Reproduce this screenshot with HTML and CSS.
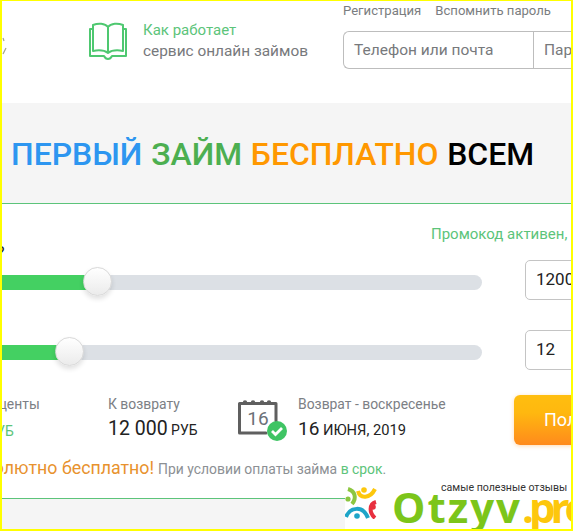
FILE: index.html
```html
<!DOCTYPE html>
<html lang="ru">
<head>
  <meta charset="UTF-8" />
  <title>Первый займ бесплатно</title>
  <link rel="stylesheet" href="styles.css">
</head>
<body>
  <div class="frame">

    <header class="top">
      <svg class="logo-scrap" width="5" height="20" viewBox="0 0 5 20" fill="none" stroke="#a3a58c" stroke-width="1.2">
        <path d="M1 1 L2 4" />
        <path d="M4 11 L1 17" />
      </svg>
      <div class="how">
        <svg class="book-icon" width="40" height="38" viewBox="0 0 40 38" fill="none" stroke="#4ec870" stroke-width="2" stroke-linejoin="round">
          <path d="M5 3 C10 1 17 1 20 5 C23 1 30 1 35 3 V29 C30 28 24 28 20 31 C16 28 10 28 5 29 Z" />
          <path d="M20 5 V31" />
          <path d="M5 7 H2 V34 H16 C17 36 18 37 20 37 C22 37 23 36 24 34 H38 V7 H35" />
        </svg>
        <div class="how-text">
          <div class="how-title">Как работает</div>
          <div class="how-sub">сервис онлайн займов</div>
        </div>
      </div>
      <div class="login">
        <div class="login-links">
          <span>Регистрация</span>
          <span>Вспомнить пароль</span>
        </div>
        <div class="login-inputs">
          <div class="login-field login-phone">Телефон или почта</div>
          <div class="login-field login-pass">Пароль</div>
        </div>
      </div>
    </header>

    <div class="banner">
      <span class="blue">ПЕРВЫЙ</span>
      <span class="green">ЗАЙМ</span>
      <span class="orange">БЕСПЛАТНО</span>
      <span>ВСЕМ</span>
    </div>

    <section class="calc">
      <div class="promo">Промокод активен, скидка</div>
      <div class="question">?</div>

      <div class="slider-row slider-amount">
        <div class="track">
          <div class="track-fill fill-amount"></div>
          <div class="thumb"></div>
        </div>
        <div class="value-box">12000</div>
      </div>

      <div class="slider-row slider-days">
        <div class="track">
          <div class="track-fill fill-days"></div>
          <div class="thumb"></div>
        </div>
        <div class="value-box">12</div>
      </div>

      <div class="summary">
        <div class="sum-col col-percent">
          <div class="sum-label">Проценты</div>
          <div class="sum-free">0 РУБ</div>
        </div>
        <div class="sum-col col-return">
          <div class="sum-label">К возврату</div>
          <div class="sum-value"><b>12 000</b> РУБ</div>
        </div>
        <svg class="cal-icon" width="50" height="44" viewBox="0 0 50 44">
          <path d="M1.5 4.5 H38 V22 M28 34 H1.5 V4.5" fill="none" stroke="#5f5f5f" stroke-width="3" stroke-linejoin="round" stroke-linecap="round" />
          <g fill="#5f5f5f">
            <circle cx="7" cy="3.5" r="2.2" />
            <circle cx="15" cy="3.5" r="2.2" />
            <circle cx="24" cy="3.5" r="2.2" />
            <circle cx="31" cy="3.5" r="2.2" />
          </g>
          <text class="cal-day" x="20" y="26" text-anchor="middle">16</text>
          <circle cx="39" cy="32" r="10" fill="#3fc464" />
          <path d="M34 32 L37.5 35.5 L44 29" fill="none" stroke="#fff" stroke-width="2.8" />
        </svg>
        <div class="sum-col col-date">
          <div class="sum-label">Возврат - воскресенье</div>
          <div class="sum-value date-value"><b>16</b> ИЮНЯ, 2019</div>
        </div>
        <div class="get-btn">Получить деньги</div>
      </div>

      <div class="note">
        <span class="note-free">Абсолютно бесплатно!</span>
        <span class="note-small">При условии оплаты займа <span class="note-green">в срок</span>.</span>
      </div>
    </section>

    <div class="bottom"></div>

    <div class="watermark">
      <svg class="mark-logo" width="32" height="32" viewBox="0 0 32 32" fill="none" stroke-width="4">
        <path d="M3 2 C10 4 12 11 7 17" stroke="#8cc63f" />
        <circle cx="3" cy="12" r="2.6" fill="#8cc63f" stroke="none" />
        <path d="M13 4 C15 12 25 12 30 2" stroke="#fdc70c" />
        <circle cx="19" cy="3" r="2.8" fill="#fdc70c" stroke="none" />
        <path d="M31 15 C24 17 24 26 30 31" stroke="#e8303f" />
        <circle cx="28" cy="20" r="2.8" fill="#e8303f" stroke="none" />
        <path d="M1 30 C5 20 18 18 23 31" stroke="#1ea5c8" />
        <circle cx="12" cy="29" r="2.8" fill="#1ea5c8" stroke="none" />
      </svg>
      <div class="mark-text">
        <div class="mark-tag">самые полезные отзывы</div>
        <div class="mark-name">Otzyv<span class="mark-pro">.pro</span></div>
      </div>
    </div>

  </div>
</body>
</html>
```

FILE: styles.css
```css
html, body {
  margin: 0;
  padding: 0;
  height: 100%;
  overflow: hidden;
  font-family: Roboto, sans-serif;
  background: #fff;
}

.frame {
  position: relative;
  box-sizing: border-box;
  width: 573px;
  height: 531px;
  border-style: solid;
  border-color: #ffff00;
  border-width: 1px 2px 2px 2px;
  overflow: hidden;
}

/* header */
.top {
  display: flex;
  height: 102px;
}

.logo-scrap {
  flex-shrink: 0;
  margin-top: 36px;
}

.how {
  display: flex;
  flex-shrink: 0;
  gap: 15px;
  width: 220px;
  margin-left: 81px;
  padding-top: 21px;
}

.book-icon {
  flex-shrink: 0;
}

.how-text {
  margin-top: -2px;
  white-space: nowrap;
}

.how-title {
  color: #5cc47a;
  font-size: 15px;
  line-height: 21px;
}

.how-sub {
  color: #77797c;
  font-size: 15.4px;
  line-height: 21px;
}

.login {
  flex-shrink: 0;
  margin-left: 35px;
  padding-top: 2px;
}

.login-links {
  display: flex;
  gap: 14px;
  color: #7a7d80;
  font-size: 13.1px;
  line-height: 16px;
}

.login-inputs {
  display: flex;
  box-sizing: border-box;
  margin-top: 12px;
  width: 400px;
  height: 38px;
  border: 1px solid #bdbdbd;
  border-right: 0;
  border-radius: 6px 0 0 6px;
}

.login-field {
  box-sizing: border-box;
  color: #77797c;
  font-size: 15.5px;
  line-height: 36px;
  padding-left: 10px;
}

.login-phone {
  width: 190px;
  border-right: 1px solid #bdbdbd;
}

/* banner */
.banner {
  display: flex;
  gap: 8.8px;
  height: 100px;
  padding-left: 9px;
  background: #f5f5f5;
  border-bottom: 1px solid #5cc47a;
  color: #000;
  font-size: 31.9px;
  font-weight: 500;
  line-height: 102px;
  white-space: nowrap;
}

.blue { color: #2d96f0; }
.green { color: #4caf50; }
.orange { color: #ff9800; }

/* calculator */
.calc {
  height: 294px;
  border-bottom: 1px solid #5cc47a;
}

.promo {
  padding-top: 21px;
  margin-left: 429px;
  white-space: nowrap;
  color: #5cc47a;
  font-size: 15px;
  line-height: 18px;
}

.question {
  height: 16px;
  margin-left: -5px;
  color: #222;
  font-size: 16px;
  line-height: 20px;
}

.slider-row {
  display: flex;
  align-items: center;
  height: 40px;
}

.slider-amount {
  margin-top: 1px;
}

.slider-days {
  margin-top: 30px;
}

.track {
  position: relative;
  flex-shrink: 0;
  width: 480px;
  height: 15px;
  margin-top: 5px;
  background: #dce0e5;
  border-radius: 0 8px 8px 0;
}

.track-fill {
  height: 100%;
  background: #44d062;
}

.fill-amount { width: 84px; }
.fill-days { width: 58px; }

.thumb {
  position: absolute;
  top: -8px;
  left: 81px;
  box-sizing: border-box;
  width: 29px;
  height: 29px;
  border: 1px solid #d8d8d8;
  border-radius: 50%;
  background: linear-gradient(#fff, #ebebeb);
  box-shadow: 0 3px 5px rgba(0, 0, 0, 0.12);
}

.slider-days .thumb {
  left: 53px;
}

.value-box {
  box-sizing: border-box;
  flex-shrink: 0;
  width: 90px;
  height: 40px;
  margin-left: 43px;
  padding-left: 10px;
  border: 1px solid #c4c4c4;
  border-radius: 5px;
  color: #222;
  font-size: 17px;
  line-height: 37px;
}

/* summary row */
.summary {
  display: flex;
  align-items: flex-start;
  margin-top: 23px;
  height: 54px;
}

.sum-col {
  flex-shrink: 0;
}

.col-percent {
  width: 135px;
  margin-left: -29px;
}

.col-return {
  width: 130px;
}

.col-date {
  width: 216px;
  margin-left: 10px;
}

.sum-label {
  color: #7c8085;
  font-size: 13.9px;
  line-height: 22px;
  white-space: nowrap;
}

.sum-free {
  margin-top: 5px;
  padding-left: 3px;
  color: #5cc47a;
  font-size: 14px;
  line-height: 22px;
}

.sum-value {
  margin-top: 2px;
  color: #222;
  font-size: 14px;
  line-height: 24px;
  white-space: nowrap;
}

.sum-value b {
  font-size: 19.5px;
  font-weight: 400;
}

.date-value {
  font-size: 14.7px;
}

.date-value b {
  font-size: 19px;
}

.cal-icon {
  flex-shrink: 0;
  margin-top: 6px;
}

.cal-day {
  fill: #6b7178;
  font-family: Roboto, sans-serif;
  font-size: 19px;
}

.get-btn {
  box-sizing: border-box;
  flex-shrink: 0;
  width: 200px;
  height: 50px;
  margin-top: 2px;
  padding-left: 30px;
  border-radius: 6px;
  background: linear-gradient(#ffbe0f, #ffb80f 35%, #ff8a1c);
  box-shadow: 0 1px 4px rgba(255, 150, 30, 0.35);
  color: #fff;
  font-size: 18px;
  line-height: 50px;
  white-space: nowrap;
}

/* note under the summary */
.note {
  margin-top: 10px;
  margin-left: -39px;
  white-space: nowrap;
  line-height: 22px;
}

.note-free {
  color: #e8922e;
  font-size: 17.8px;
}

.note-small {
  color: #8c9094;
  font-size: 13.9px;
}

.note-green {
  color: #5cc47a;
}

/* bottom strip */
.bottom {
  height: 32px;
  background: #f5f5f5;
}

.watermark {
  position: absolute;
  left: 343px;
  top: 480px;
  display: flex;
  width: 226px;
  height: 48px;
  background: #fff;
}

.mark-logo {
  flex-shrink: 0;
  margin-top: 6px;
}

.mark-text {
  margin-left: 15px;
}

.mark-tag {
  margin-left: 49px;
  color: #333;
  font-size: 10.6px;
  line-height: 14px;
  white-space: nowrap;
}

.mark-name {
  margin-top: -1px;
  color: #7cc51a;
  font-family: "Open Sans", sans-serif;
  font-size: 42px;
  font-weight: 700;
  letter-spacing: 2px;
  line-height: 26px;
  white-space: nowrap;
}

.mark-pro {
  color: #fdc70c;
  letter-spacing: -5px;
}
```
